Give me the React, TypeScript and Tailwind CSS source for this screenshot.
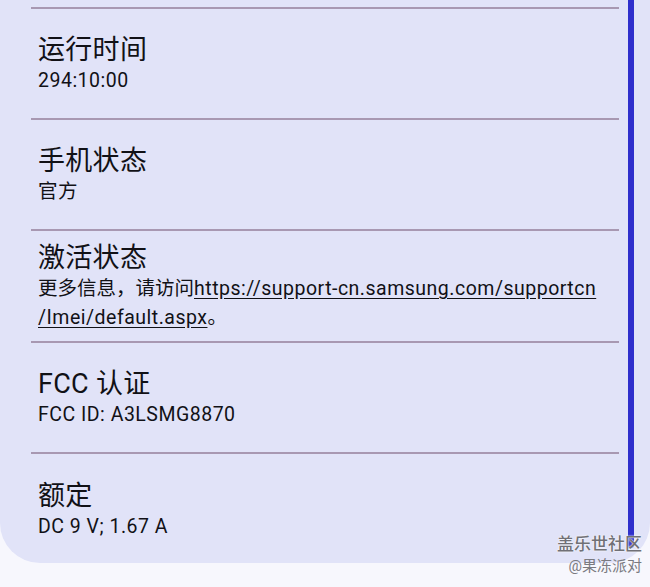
import React from 'react';

type Item = {
  title: string;
  lines: React.ReactNode[];
};

const items: Item[] = [
  { title: '运行时间', lines: ['294:10:00'] },
  { title: '手机状态', lines: ['官方'] },
  {
    title: '激活状态',
    lines: [
      <>
        <span className="tracking-normal">更多信息，请访问</span>
        <span className="underline underline-offset-[3px]">https://support-cn.samsung.com/supportcn</span>
      </>,
      <>
        <span className="underline underline-offset-[3px]">/Imei/default.aspx</span>。
      </>,
    ],
  },
  { title: 'FCC 认证', lines: ['FCC ID: A3LSMG8870'] },
  { title: '额定', lines: ['DC 9 V; 1.67 A'] },
];

const App: React.FC = () => {
  return (
    <div
      className="relative w-[650px] h-[587px] overflow-hidden bg-[#f7f7fd] text-[#111116]"
      style={{ fontFamily: 'Roboto, "Noto Sans CJK SC", sans-serif' }}
    >
      <div className="bg-[#e1e3f8] rounded-b-[40px] pt-[7px]">
        {items.map((item, i) => (
          <div key={item.title}>
            <div className="ml-[31px] mr-[31px] h-[2px] bg-[#a898b2]" />
            <div
              className={
                'flex flex-col justify-center min-h-[109px] pl-[38px] pr-[30px] pt-[11px] ' +
                (i === items.length - 1 ? 'pb-[8px]' : 'pb-[9px]')
              }
            >
              <div className="text-[27px] leading-[32px] tracking-[0.3px]">{item.title}</div>
              {item.lines.map((line, j) => (
                <div key={j} className="text-[19.5px] leading-[29px] tracking-[0.5px] whitespace-nowrap">
                  {line}
                </div>
              ))}
            </div>
          </div>
        ))}
      </div>

      {/* scrollbar */}
      <div className="absolute top-0 right-[16px] w-[6px] h-[548px] rounded-b-full bg-[#2f2fcc]" />

      {/* watermark */}
      <div className="absolute right-[8px] top-[536px] flex flex-col items-end leading-none">
        <span
          className="text-[17px] text-[#707076] font-medium"
          style={{ textShadow: '0 0 2px #fff, 0 0 1px #fff' }}
        >
          盖乐世社区
        </span>
        <span className="mt-[6px] text-[15px] text-[#7a7a80]">@果冻派对</span>
      </div>
    </div>
  );
};

export default App;
